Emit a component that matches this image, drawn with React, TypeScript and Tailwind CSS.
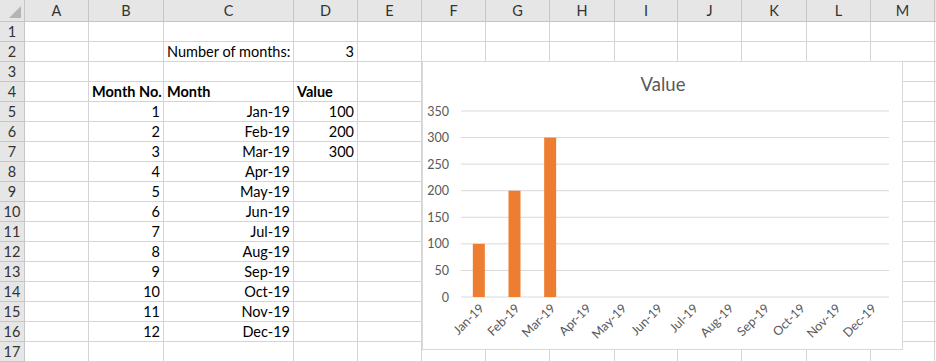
import React from 'react';

const cols = ['A', 'B', 'C', 'D', 'E', 'F', 'G', 'H', 'I', 'J', 'K', 'L', 'M'];
const months = ['Jan-19', 'Feb-19', 'Mar-19', 'Apr-19', 'May-19', 'Jun-19', 'Jul-19', 'Aug-19', 'Sep-19', 'Oct-19', 'Nov-19', 'Dec-19'];
const values = [100, 200, 300];

type Cell = { text: string; align?: 'left' | 'right'; bold?: boolean };

const buildRow = (r: number): Record<string, Cell> => {
  if (r === 2) return { C: { text: 'Number of months:' }, D: { text: '3', align: 'right' } };
  if (r === 4)
    return {
      B: { text: 'Month No.', bold: true },
      C: { text: 'Month', bold: true },
      D: { text: 'Value', bold: true },
    };
  if (r >= 5 && r <= 16) {
    const i = r - 5;
    const row: Record<string, Cell> = {
      B: { text: String(i + 1), align: 'right' },
      C: { text: months[i], align: 'right' },
    };
    if (values[i] !== undefined) row.D = { text: String(values[i]), align: 'right' };
    return row;
  }
  return {};
};

const Chart = () => {
  const x0 = 38;
  const x1 = 466;
  const y0 = 235;
  const y350 = 49;
  const k = (y0 - y350) / 350;
  const band = (x1 - x0) / 12;
  const ticks = [0, 50, 100, 150, 200, 250, 300, 350];

  return (
    <div className="absolute left-[422px] top-[61px] w-[481px] h-[289px] bg-white border border-[#d9d9d9]">
      <svg width="479" height="287" className="block" style={{ fontFamily: 'Lato, "Open Sans", sans-serif' }}>
        <text x="240" y="29" textAnchor="middle" fontSize="18.5" fill="#595959">
          Value
        </text>
        {ticks.map((t) => {
          const y = y0 - t * k;
          return (
            <g key={t}>
              <line x1={x0} x2={x1} y1={y} y2={y} stroke="#d9d9d9" strokeWidth="1" />
              <text x="26" y={y + 4.5} textAnchor="end" fontSize="12.5" fill="#595959">
                {t}
              </text>
            </g>
          );
        })}
        {values.map((v, i) => {
          const cx = x0 + band * (i + 0.5);
          return <rect key={i} x={cx - 6} y={y0 - v * k} width="12" height={v * k} fill="#ed7d31" />;
        })}
        {months.map((m, i) => {
          const cx = x0 + band * (i + 0.5) + 6;
          return (
            <text
              key={m}
              x={cx}
              y={247}
              textAnchor="end"
              fontSize="12.5"
              fill="#595959"
              transform={`rotate(-45 ${cx} 247)`}
            >
              {m}
            </text>
          );
        })}
      </svg>
    </div>
  );
};

export default function App() {
  const rows = Array.from({ length: 17 }, (_, i) => i + 1);

  return (
    <div
      className="relative w-[936px] h-[362px] overflow-hidden bg-white text-[14.5px] text-black"
      style={{ fontFamily: 'Lato, "Open Sans", sans-serif' }}
    >
      <div className="grid grid-cols-[25px_64px_75px_130px_64px_64px_64px_64px_65px_63px_64px_65px_64px_64px_1px]">
        {/* corner */}
        <div className="h-[22px] bg-[#e6e6e6] border-r border-b border-[#c6c6c6] relative">
          <svg width="24" height="21" className="absolute left-0 top-0">
            <polygon points="21,6 21,18 9,18" fill="#b4b4b4" />
          </svg>
        </div>
        {cols.map((c) => (
          <div
            key={c}
            className="h-[22px] bg-[#e6e6e6] border-r border-b border-[#c6c6c6] flex items-center justify-center text-[#333] pt-[1px]"
          >
            {c}
          </div>
        ))}
        <div className="h-[22px] bg-[#e6e6e6] border-b border-[#c6c6c6]" />

        {rows.map((r) => {
          const data = buildRow(r);
          return (
            <React.Fragment key={r}>
              <div className="h-[20px] bg-[#e6e6e6] border-r border-b border-[#c6c6c6] flex items-end justify-center pb-[2px] leading-none text-[#333]">
                {r}
              </div>
              {cols.map((c) => {
                const cell = data[c];
                return (
                  <div
                    key={c}
                    className={`h-[20px] border-r border-b border-[#d4d4d4] flex items-end pb-[2px] px-[3px] whitespace-nowrap leading-none ${
                      cell?.align === 'right' ? 'justify-end' : 'justify-start'
                    } ${cell?.bold ? 'font-bold' : ''}`}
                  >
                    {cell?.text}
                  </div>
                );
              })}
              <div className="h-[20px] border-b border-[#d4d4d4]" />
            </React.Fragment>
          );
        })}
      </div>
      <Chart />
    </div>
  );
}
